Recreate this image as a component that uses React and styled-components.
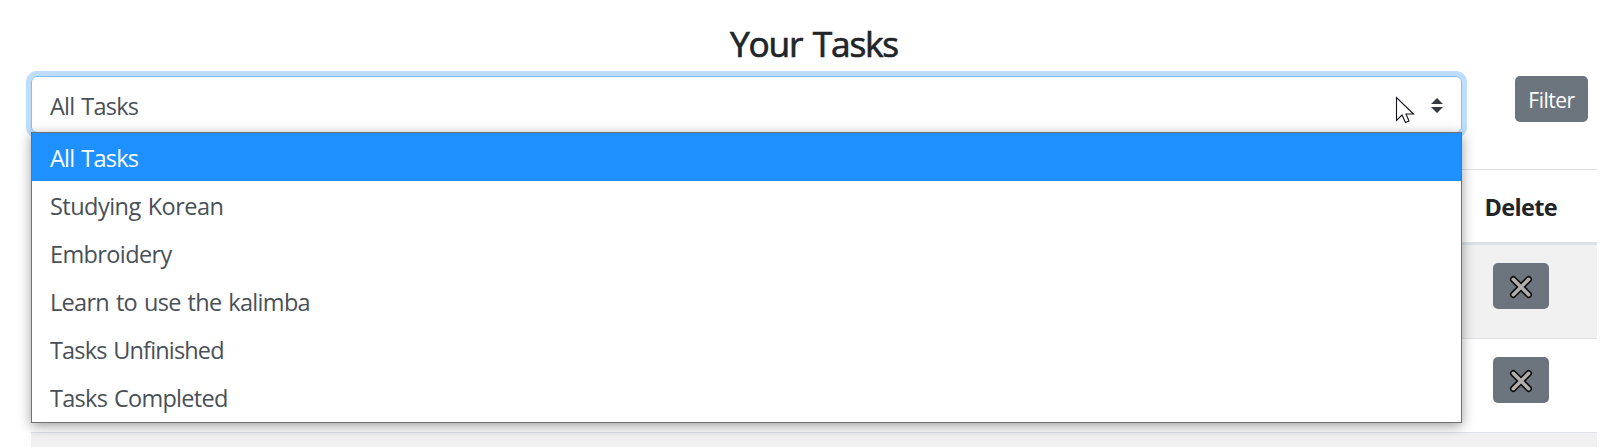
import React from 'react';
import styled, { createGlobalStyle } from 'styled-components';

const Global = createGlobalStyle`
  *, *::before, *::after { box-sizing: border-box; }
  body {
    margin: 0;
    background: #fff;
    color: #212529;
    font-family: "Open Sans", "Noto Sans", sans-serif;
    font-size: 23.5px;
    line-height: 36px;
    overflow: hidden;
  }
`;

const Page = styled.main`
  height: 447px;
  padding: 22px 21px 0 31px;
  overflow: hidden;
`;

const Title = styled.h2`
  margin: 0 0 11px;
  font-size: 35.3px;
  font-weight: 400;
  line-height: 43px;
  text-align: center;
  letter-spacing: -1.2px;
  word-spacing: 2.5px;
  -webkit-text-stroke: 0.7px #212529;
`;

const Toolbar = styled.form`
  display: flex;
  align-items: flex-start;
  gap: 53px;
  height: 93px;
`;

const SelectWrap = styled.div`
  position: relative;
  width: 1431px;
`;

const SelectBox = styled.div`
  display: flex;
  align-items: center;
  justify-content: space-between;
  height: 57px;
  padding: 2px 18px 0;
  border: 1px solid #80bdff;
  border-radius: 6px;
  box-shadow: 0 0 0 5px #bfdeff;
  color: #495057;
`;

const Menu = styled.ul`
  position: absolute;
  top: 56px;
  left: 0;
  z-index: 2;
  width: 100%;
  height: 291px;
  margin: 0;
  padding: 0;
  list-style: none;
  border: 1px solid #707070;
  background: #fff;
  box-shadow: 0 3px 12px rgba(0, 0, 0, 0.38);
`;

const Option = styled.li`
  height: 48px;
  padding: 1px 18px 0;
  line-height: 48px;
  background: ${(p) => (p.$active ? '#1e90ff' : 'transparent')};
  color: ${(p) => (p.$active ? '#fff' : '#495057')};
`;

const Label = styled.span`
  letter-spacing: ${(p) => p.$track || 0}px;
  word-spacing: 1.5px;
`;

const Button = styled.button`
  display: flex;
  align-items: center;
  justify-content: center;
  width: ${(p) => p.$width}px;
  height: 46px;
  padding: 2px 0 0;
  border: 0;
  border-radius: 5px;
  background: #6c757d;
  color: #fff;
  font: 21px/32px "Open Sans", "Noto Sans", sans-serif;
`;

const Table = styled.section`
  width: 1566px;
`;

const HeadRow = styled.div`
  display: flex;
  justify-content: flex-end;
  height: 76px;
  padding: 19px 40px 0 0;
  border-top: 1px solid #dee2e6;
  border-bottom: 3px solid #dee2e6;
  font-weight: 700;
`;

const Row = styled.div`
  display: flex;
  justify-content: flex-end;
  height: ${(p) => (p.$first ? 93 : 94)}px;
  padding: 18px 48px 0 0;
  border-top: ${(p) => (p.$first ? 0 : 1)}px solid #dee2e6;
  background: ${(p) => (p.$striped ? '#f1f1f1' : '#fff')};
`;

const Pointer = styled.svg`
  position: absolute;
  left: 1364px;
  top: 20px;
`;

const options = [
  ['All Tasks', -0.76],
  ['Studying Korean', -0.53],
  ['Embroidery', -0.62],
  ['Learn to use the kalimba', -0.7],
  ['Tasks Unfinished', -0.85],
  ['Tasks Completed', -0.73],
];

function CrossIcon() {
  return (
    <svg width="24" height="24" viewBox="0 0 24 24">
      <path d="M4.3 4.3L19.7 19.7M19.7 4.3L4.3 19.7" stroke="#0c0c0c" strokeWidth="6.6" strokeLinecap="round" />
      <path d="M4.3 4.3L19.7 19.7M19.7 4.3L4.3 19.7" stroke="#b0aeac" strokeWidth="3.6" strokeLinecap="round" />
    </svg>
  );
}

export default function App() {
  return (
    <>
      <Global />
      <Page>
        <Title>Your Tasks</Title>
        <Toolbar>
          <SelectWrap>
            <SelectBox>
              <Label $track={-0.76}>All Tasks</Label>
              <svg width="12" height="15" viewBox="0 0 12 15">
                <path d="M0 6L6 0L12 6ZM0 9H12L6 15Z" fill="#343a40" />
              </svg>
            </SelectBox>
            <Menu>
              {options.map(([text, track], i) => (
                <Option key={text} $active={i === 0}>
                  <Label $track={track}>{text}</Label>
                </Option>
              ))}
            </Menu>
            <Pointer width="20" height="30" viewBox="0 0 20 30">
              <path d="M1.5 1.5V24.5L7 19L10.5 26.5L14 25L11 18H18.5Z" fill="#fff" stroke="#14141e" strokeWidth="1.1" />
            </Pointer>
          </SelectWrap>
          <Button type="button" $width={73}>
            <Label $track={-0.5}>Filter</Label>
          </Button>
        </Toolbar>
        <Table>
          <HeadRow>
            <Label $track={-0.65}>Delete</Label>
          </HeadRow>
          <Row $first $striped>
            <Button $width={56}><CrossIcon /></Button>
          </Row>
          <Row>
            <Button $width={56}><CrossIcon /></Button>
          </Row>
          <Row $striped />
        </Table>
      </Page>
    </>
  );
}
